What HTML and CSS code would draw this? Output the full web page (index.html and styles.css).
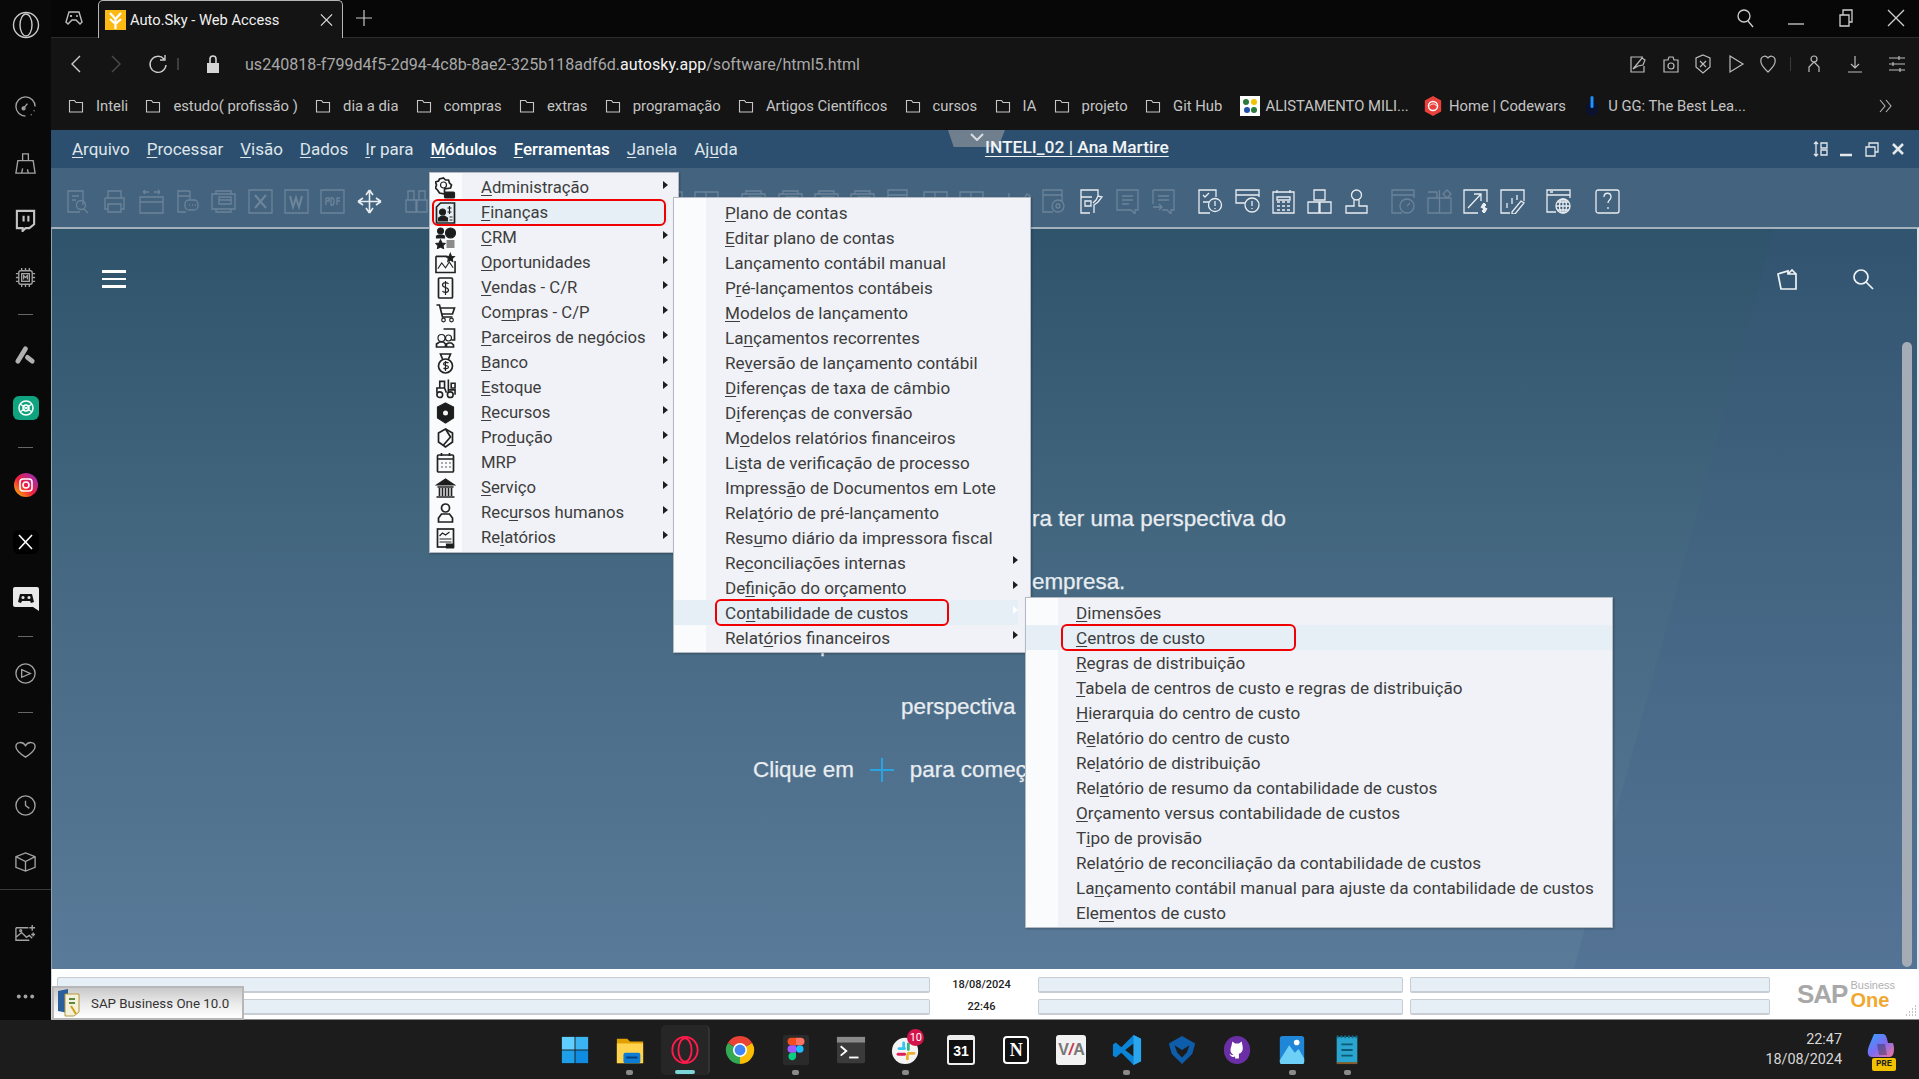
FILE: index.html
```html
<!DOCTYPE html>
<html lang="pt-BR">
<head>
<meta charset="utf-8">
<title>Auto.Sky - Web Access</title>
<link rel="stylesheet" href="styles.css">
</head>
<body>
<svg class="defs" width="0" height="0">
  <defs>
    <symbol id="folder" viewBox="0 0 16 16"><path d="M1.5 14V2.5h5l1.5 2h6.5V14z"/></symbol>
    <symbol id="t-docsearch" viewBox="0 0 25 25"><path d="M17 16V2H2v21h12M6 7h7M6 11h4"/><circle cx="15" cy="16" r="4.5"/><path d="M18 20l4 4"/></symbol>
    <symbol id="t-print" viewBox="0 0 25 25"><path d="M6 9V2h13v7M3 9h19v11h-3M6 20H3V9M6 15h13v8H6z"/></symbol>
    <symbol id="t-win" viewBox="0 0 25 25"><path d="M1 8h23v16H1zM1 13h23M4 3h6M15 3h6M4 3l2-2M4 3l2 2M21 3l-2-2M21 3l-2 2"/></symbol>
    <symbol id="t-docchat" viewBox="0 0 25 25"><path d="M15 2H3v21h8M3 7h12V2M15 7v3"/><rect x="10" y="11" width="13" height="10" rx="4"/><path d="M14 16h1M17 16h1M20 16h1"/></symbol>
    <symbol id="t-stack" viewBox="0 0 25 25"><path d="M5 5V2h15v3M1 5h23v15H1zM5 20v3h15v-3M8 8h12v7H8zM8 11h12"/></symbol>
    <symbol id="t-x" viewBox="0 0 25 25"><path d="M1 1h23v23H1z"/><path class="fat" d="M7 6l11 13M18 6L7 19"/></symbol>
    <symbol id="t-w" viewBox="0 0 25 25"><path d="M1 1h23v23H1z"/><path class="fat" d="M6 7l3 11 3-9 3 9 3-11"/></symbol>
    <symbol id="t-pdf" viewBox="0 0 25 25"><path d="M1 1h23v23H1z"/><path d="M6 9v7M6 9h3v3H6M11 9v7h2l1-2v-3l-1-2zM17 16V9h3M17 12h3"/></symbol>
    <symbol id="t-move" viewBox="0 0 25 25"><path class="thin-w" d="M12.500 1v23M1 12.500h23M12.500 1L9 6M12.500 1L16 6M12.500 24L9 19M12.500 24L16 19M1 12.500L6 9M1 12.500L6 16M24 12.500L19 9M24 12.500L19 16"/></symbol>
    <symbol id="t-binoc" viewBox="0 0 25 25"><path d="M4 2h6v9H4zM15 2h6v9h-6zM2 11h10v12H2zM13 11h10v12H13z"/></symbol>
    <symbol id="t-cols" viewBox="0 0 25 25"><path d="M1 3h23v20H1zM12 3v20M1 9h23"/></symbol>
    <symbol id="t-pen" viewBox="0 0 25 25"><path d="M3 4v19M10 22L21 5l3 2-11 17-4 1z"/></symbol>
    <symbol id="t-gear" viewBox="0 0 25 25"><path d="M20 12V1H1v22h10M1 6h19"/><circle cx="16" cy="17" r="6"/><circle cx="16" cy="17" r="2"/></symbol>
    <symbol id="t-flow" viewBox="0 0 25 25"><path d="M19 8V1H2v23h9M2 8h11M6 12h6v5H6zM15 24v-8l4-3 4-5-4-1-2 4-3 3"/></symbol>
    <symbol id="t-chat" viewBox="0 0 25 25"><path d="M2 1h21v20h-3v4l-4-4H2zM7 7h11M7 11h11M7 15h7"/></symbol>
    <symbol id="t-chat2" viewBox="0 0 25 25"><path d="M2 1h21v20h-3v4l-4-4h-5M2 15V1M7 7h11M7 11h11M2 18h9M8 15l3 3-3 3"/></symbol>
    <symbol id="t-doctime" viewBox="0 0 25 25"><path d="M18 8V1H1v23h11M5 6l2 2 4-4M5 13h6"/><circle cx="17" cy="16" r="6.500"/><path d="M17 12v5M17 19v1"/></symbol>
    <symbol id="t-wintime" viewBox="0 0 25 25"><path d="M24 8V1H1v13h9M1 6h23"/><circle cx="17" cy="16" r="7"/><path d="M17 12v5M17 19v1"/></symbol>
    <symbol id="t-calc" viewBox="0 0 25 25"><path d="M2 3h21v21H2zM6 1v3M19 1v3M6 8h13v3H6zM6 13h3M11 13h3M16 13h3M6 17h3M11 17h3M16 17h3M6 21h3M11 21h3M16 21h3"/></symbol>
    <symbol id="t-boxes" viewBox="0 0 25 25"><path d="M7 1h11v10H7zM1 13h11v11H1zM13 13h11v11H13z"/></symbol>
    <symbol id="t-stamp" viewBox="0 0 25 25"><circle cx="12.500" cy="6" r="5"/><path d="M10 11v6H2v7h21v-7h-8v-6"/></symbol>
    <symbol id="t-dash" viewBox="0 0 25 25"><path d="M23 9V1H1v23h10M1 6h22"/><circle cx="16" cy="17" r="7"/><path d="M16 17l3-3"/></symbol>
    <symbol id="t-grid" viewBox="0 0 25 25"><path d="M1 9h23v15H1zM12.500 1v23M1 3h9v6M20 1l4 4-4 4-4-4z"/></symbol>
    <symbol id="t-money" viewBox="0 0 25 25"><path d="M24 13V1H1v23h14M5 19L18 5M11 5h7v7"/><path class="fat" d="M23 16h-3l-1 2 4 2-1 2h-3M21 14v10"/></symbol>
    <symbol id="t-edit" viewBox="0 0 25 25"><path d="M24 12V1H1v23h9M7 14v5M12 9v6M17 6v5M12 23l9-11 3 2-9 11-3 0z"/></symbol>
    <symbol id="t-globe" viewBox="0 0 25 25"><path d="M24 9V1H1v22h9M1 6h23M4 3h3"/><circle cx="17" cy="17" r="7"/><path d="M10 17h14M17 10v14M12 13h10M12 21h10"/><ellipse cx="17" cy="17" rx="3.500" ry="7"/></symbol>
    <symbol id="t-help" viewBox="0 0 25 25"><rect x="1" y="1" width="23" height="23" rx="2"/><path d="M9 8c0-5 7-5 7 0 0 3-3 3-3 6M13 18v2"/></symbol>

    <symbol id="m-adm" viewBox="0 0 20 22"><path class="thick" d="M8 1l2 2h3l1 3 2 2-1 3-6 1v5l-5-1-2-3-2-2 1-3-1-3 3-1 1-2z"/><circle cx="8" cy="8" r="3"/><rect class="solid" x="9" y="15" width="10" height="6" rx="1"/></symbol>
    <symbol id="m-fin" viewBox="0 0 20 22"><path class="thick" d="M5 1h14v20H1V5z"/><circle class="solid" cx="7" cy="10" r="3"/><path class="solid" d="M3 19v-3l3-2h3l3 2v3z"/><path d="M14 4v8M12 6h4M12 10h4M14 15h3M14 18h3"/></symbol>
    <symbol id="m-crm" viewBox="0 0 20 22"><circle class="solid" cx="5" cy="4" r="3"/><path class="solid" d="M1 11V9l2-1h4l2 1v2z"/><circle class="solid" cx="15" cy="6" r="5"/><path class="solid" d="M5 13l1.500 3 3 .5-2 2 .5 3-3-1.500-3 1.500.5-3-2-2 3-.5z"/><rect class="grey" x="11" y="13" width="8" height="8"/></symbol>
    <symbol id="m-opp" viewBox="0 0 22 22"><path class="thick" d="M1 4h12M1 4v17h20V9"/><path d="M3 17l4-6 4 5 4-6 4 6"/><path class="solid" d="M16 1l1.200 3 3 .3-2.200 2 .6 3-2.600-1.500-2.600 1.500.6-3-2.200-2 3-.3z"/></symbol>
    <symbol id="m-sale" viewBox="0 0 20 22"><rect class="thick" x="3" y="1" width="14" height="20" rx="1"/><path d="M13 7c-1-2-6-2-6 1s6 2 6 5-5 3-6 1M10 4v14"/></symbol>
    <symbol id="m-cart" viewBox="0 0 20 22"><path class="thick" d="M1 3h3l3 12h10M5 6h14l-2 6H7"/><circle cx="8" cy="18" r="1.800"/><circle cx="16" cy="18" r="1.800"/></symbol>
    <symbol id="m-bp" viewBox="0 0 20 22"><path class="thick" d="M8 2h11v11h-3"/><circle cx="6" cy="11" r="3.500"/><circle cx="13" cy="11" r="3"/><path class="thick" d="M1 20v-3l3-2h4l2 2v3zM11 20v-3l2-1h3l2 2v2z"/></symbol>
    <symbol id="m-bank" viewBox="0 0 20 22"><circle class="thick" cx="10" cy="14" r="7"/><path class="thick" d="M7 7L5 2h10l-2 5"/><path d="M13 11c-1-1-5-1-5 1s5 1 5 3-4 2-5 1M10 9v10"/></symbol>
    <symbol id="m-stock" viewBox="0 0 22 22"><circle class="thick" cx="5" cy="18" r="3"/><circle class="thick" cx="16" cy="18" r="3"/><path class="thick" d="M2 16v-5h8l2 5M10 11V4H5v7M14 2v14M14 13h7v5M17 6h4v5h-4z"/></symbol>
    <symbol id="m-res" viewBox="0 0 20 22"><path class="solid" d="M10 1l8 4v11l-8 5-8-5V5z"/><circle class="hole" cx="10" cy="11" r="2.500"/></symbol>
    <symbol id="m-prod" viewBox="0 0 20 22"><path class="thick" d="M10 2l7 4v9l-7 5-7-5V6z"/><path class="thick" d="M10 2l5 8-7 8"/></symbol>
    <symbol id="m-mrp" viewBox="0 0 20 22"><rect class="thick" x="2" y="3" width="16" height="17" rx="1"/><path class="thick" d="M2 7h16M6 1v3M14 1v3"/><path class="thick" d="M6 11h1M10 11h1M14 11h1M6 15h1M10 15h1M14 15h1"/></symbol>
    <symbol id="m-serv" viewBox="0 0 20 22"><path class="solid" d="M1 8l9-6 9 6z"/><path class="thick" d="M2 10h16M1 20h18M4 11v8M7 11v8M10 11v8M13 11v8M16 11v8"/></symbol>
    <symbol id="m-hr" viewBox="0 0 20 22"><circle class="thick" cx="10" cy="6" r="4"/><path class="thick" d="M3 20v-4l3-4h8l3 4v4z"/></symbol>
    <symbol id="m-rep" viewBox="0 0 20 22"><rect class="thick" x="2" y="2" width="16" height="18"/><path d="M4 9l3-3 3 2 4-3M4 12h12M4 15h12"/><path class="solid" d="M11 17h7v4h-7z"/></symbol>
  </defs>
</svg>

<div class="screen">
  <div class="main">
    <aside class="sidebar">
      <div class="sb-top"><svg class="sb-icon lg" viewBox="0 0 28 28"><circle cx="14" cy="14" r="12.500"/><ellipse cx="14" cy="14" rx="6" ry="11"/></svg></div>
      <div class="sb-group g-b">
        <div class="sb-item"><svg class="sb-icon" viewBox="0 0 24 24"><path d="M12 22a10 10 0 1 1 10-10M9 15l5-6M21 16v1M18 20v1"/><circle cx="10" cy="14" r="1.500"/></svg></div>
        <div class="sb-item"><svg class="sb-icon" viewBox="0 0 24 24"><path d="M9 9V2h6v7M4 9h16l2 13H2zM8 22l1-5M15 22l-1-4"/></svg></div>
        <div class="sb-item"><svg class="sb-icon twitch" viewBox="0 0 24 24"><path d="M3 2h18v14l-5 4h-4l-3 3v-3H3z"/><path d="M10 7v6M15 7v6"/></svg></div>
        <div class="sb-item"><svg class="sb-icon" viewBox="0 0 24 24"><rect x="5" y="5" width="14" height="14" rx="2"/><rect x="8" y="8" width="8" height="8"/><path d="M8 2v3M12 2v3M16 2v3M8 19v3M12 19v3M16 19v3M2 8h3M2 12h3M2 16h3M19 8h3M19 12h3M19 16h3M10 14v-4l2 2 2-2v4"/></svg></div>
      </div>
      <div class="sb-line"></div>
      <div class="sb-group g-c">
        <div class="sb-item short"><svg class="sb-icon" viewBox="0 0 24 24"><path class="sb-fat" d="M4 19L12 6"/><path class="sb-fat" d="M14 15l5 4"/></svg></div>
        <div class="sb-item short"><svg class="sb-app" viewBox="0 0 26 24"><rect width="26" height="24" rx="6" fill="#10a37f"/><circle cx="13" cy="12" r="7" fill="none" stroke="#fff" stroke-width="1.500"/><circle cx="13" cy="12" r="3" fill="none" stroke="#fff" stroke-width="1.500"/><path d="M7 8l12 8M19 8L7 16" stroke="#fff" stroke-width="1.200"/></svg></div>
      </div>
      <div class="sb-line l-c"></div>
      <div class="sb-group g-d">
        <div class="sb-item"><svg class="sb-app" viewBox="0 0 26 24"><defs><linearGradient id="ig" x1="0" y1="1" x2="1" y2="0"><stop offset="0" stop-color="#fdc800"/><stop offset=".45" stop-color="#f0203c"/><stop offset="1" stop-color="#8a2fd0"/></linearGradient></defs><circle cx="13" cy="12" r="12" fill="url(#ig)"/><rect x="7" y="6" width="12" height="12" rx="3" fill="none" stroke="#fff" stroke-width="1.600"/><circle cx="13" cy="12" r="3" fill="none" stroke="#fff" stroke-width="1.600"/></svg></div>
        <div class="sb-item"><svg class="sb-app" viewBox="0 0 26 24"><rect width="26" height="24" rx="6" fill="#000"/><path d="M6 5l13 14M19 5L6 19" stroke="#fff" stroke-width="1.600" fill="none"/></svg></div>
        <div class="sb-item"><svg class="sb-app" viewBox="0 0 26 24"><path d="M2 0h22a2 2 0 0 1 2 2v22l-6-4H2a2 2 0 0 1-2-2V2a2 2 0 0 1 2-2z" fill="#e8e8e8"/><path d="M7 7h12l2 8-3 1-1-2H9l-1 2-3-1z" fill="#111"/><circle cx="10" cy="10.500" r="1.500" fill="#e8e8e8"/><circle cx="16" cy="10.500" r="1.500" fill="#e8e8e8"/></svg></div>
      </div>
      <div class="sb-line l-d"></div>
      <div class="sb-group g-e">
        <div class="sb-item"><svg class="sb-icon" viewBox="0 0 24 24"><circle cx="12" cy="12" r="10"/><path d="M8 8l9 4-9 4z"/></svg></div>
      </div>
      <div class="sb-line l-e"></div>
      <div class="sb-group g-f">
        <div class="sb-item mid"><svg class="sb-icon" viewBox="0 0 24 24"><path d="M12 20C6 16 2 13 2 9c0-5 7-6 10-1 3-5 10-4 10 1 0 4-4 7-10 11z"/></svg></div>
        <div class="sb-item mid"><svg class="sb-icon" viewBox="0 0 24 24"><circle cx="12" cy="12" r="10"/><path d="M12 7v5l4 3"/></svg></div>
        <div class="sb-item mid"><svg class="sb-icon" viewBox="0 0 24 24"><path d="M12 3l10 4v11l-10 4-10-4V7zM2 7l10 5 10-5M12 12v10"/></svg></div>
      </div>
      <div class="sb-sep"></div>
      <div class="sb-group g-g">
        <div class="sb-item mid"><svg class="sb-icon" viewBox="0 0 24 24"><path d="M2 6h13M2 6v13h14M2 16l6-5 5 5 3-2 3 3M19 3v6M16 6h6M20 11v4M18 13h4"/><circle cx="7" cy="9" r="1"/></svg></div>
        <div class="sb-item mid"><svg class="sb-icon dots" viewBox="0 0 24 24"><circle cx="5" cy="12" r="2"/><circle cx="12" cy="12" r="2"/><circle cx="19" cy="12" r="2"/></svg></div>
      </div>
    </aside>

    <div class="browser">
      <header class="tabstrip">
        <svg class="gx" viewBox="0 0 20 16"><path d="M5 2h10l3 10-2 2-4-4H8l-4 4-2-2zM6 6h2M7 5v2M12 6h2"/></svg>
        <div class="tab">
          <svg class="favicon" viewBox="0 0 21 20"><rect width="21" height="20" fill="#fdb913"/><path d="M10.500 19V9M10.500 9L5 3M10.500 9L16 3M10.500 14L5 9M10.500 14L16 9" stroke="#fff" stroke-width="2.200" fill="none"/></svg>
          <span class="tab-title">Auto.Sky - Web Access</span>
          <svg class="tab-close" viewBox="0 0 14 14"><path d="M1 1l12 12M13 1L1 13"/></svg>
        </div>
        <svg class="tab-new" viewBox="0 0 16 16"><path d="M8 0v16M0 8h16"/></svg>
        <div class="win-controls">
          <svg class="wc" viewBox="0 0 20 20"><circle cx="8" cy="8" r="6"/><path d="M12 13l5 6"/></svg>
          <svg class="wc" viewBox="0 0 20 20"><path d="M2 16h16"/></svg>
          <svg class="wc" viewBox="0 0 20 20"><path d="M4 7h9v11H4zM7 7V2h9v12h-3"/></svg>
          <svg class="wc" viewBox="0 0 20 20"><path d="M2 2l16 16M18 2L2 18"/></svg>
        </div>
      </header>

      <div class="addressbar">
        <svg class="nav" viewBox="0 0 12 20"><path d="M10 2L2 10l8 8"/></svg>
        <svg class="nav dim" viewBox="0 0 12 20"><path d="M2 2l8 8-8 8"/></svg>
        <svg class="nav reload" viewBox="0 0 20 20"><path d="M16 5a8 8 0 1 0 2 6M17 1v5h-5"/></svg>
        <span class="ab-dots"></span>
        <svg class="lock" viewBox="0 0 14 18"><path class="lock-body" d="M1 8h12v10H1z"/><path class="lock-arc" d="M4 8V4a3 3 0 0 1 6 0v4"/></svg>
        <div class="url">us240818-f799d4f5-2d94-4c8b-8ae2-325b118adf6d.<b>autosky.app</b>/software/html5.html</div>
        <div class="ab-tools">
          <svg class="ab-i" viewBox="0 0 20 20"><path d="M15 3H3v15h13v-6M5 15l9-11 3 2-2 5-5 1z"/></svg>
          <svg class="ab-i" viewBox="0 0 20 20"><path d="M3 6h4l1-3h4l1 3h4v12H3z"/><circle cx="10" cy="12" r="3"/></svg>
          <svg class="ab-i" viewBox="0 0 20 20"><path d="M10 1l7 3v9l-7 6-7-6V4zM7 7l6 6M13 7l-6 6"/></svg>
          <svg class="ab-i" viewBox="0 0 20 20"><path d="M4 2l13 8-13 8z"/></svg>
          <svg class="ab-i" viewBox="0 0 20 20"><path d="M10 18C4 12 2 9 3 5c1-3 5-4 7-1 2-3 6-2 7 1 1 4-1 7-7 13z"/></svg>
          <span class="ab-sep"></span>
          <svg class="ab-i" viewBox="0 0 20 20"><circle cx="10" cy="5" r="3"/><path d="M10 8l-5 5v5M10 8l5 5v5"/></svg>
          <svg class="ab-i i3" viewBox="0 0 20 20"><path d="M10 2v12M6 10l4 4 4-4M3 18h14"/></svg>
          <svg class="ab-i i3" viewBox="0 0 20 20"><path d="M2 4h16M2 10h16M2 16h16M12 2v4M6 8v4M13 14v4"/></svg>
        </div>
      </div>

      <nav class="bookmarks">
        <a class="bm"><svg class="folder"><use href="#folder"/></svg>Inteli</a>
        <a class="bm"><svg class="folder"><use href="#folder"/></svg>estudo( profissão )</a>
        <a class="bm"><svg class="folder"><use href="#folder"/></svg>dia a dia</a>
        <a class="bm"><svg class="folder"><use href="#folder"/></svg>compras</a>
        <a class="bm"><svg class="folder"><use href="#folder"/></svg>extras</a>
        <a class="bm"><svg class="folder"><use href="#folder"/></svg>programação</a>
        <a class="bm"><svg class="folder"><use href="#folder"/></svg>Artigos Científicos</a>
        <a class="bm"><svg class="folder"><use href="#folder"/></svg>cursos</a>
        <a class="bm"><svg class="folder"><use href="#folder"/></svg>IA</a>
        <a class="bm"><svg class="folder"><use href="#folder"/></svg>projeto</a>
        <a class="bm"><svg class="folder"><use href="#folder"/></svg>Git Hub</a>
        <a class="bm tight"><svg class="bm-fav" viewBox="0 0 20 20"><rect width="20" height="20" fill="#fff"/><circle cx="6" cy="6" r="3" fill="#2a7a3a"/><circle cx="14" cy="6" r="3" fill="#f2c200"/><circle cx="7" cy="14" r="3" fill="#1f4fa8"/><circle cx="14" cy="14" r="3" fill="#2a7a3a"/></svg>ALISTAMENTO MILI...</a>
        <a class="bm tight"><svg class="bm-fav" viewBox="0 0 20 22"><path d="M10 0l9 5v12l-9 5-9-5V5z" fill="#e8413c"/><circle cx="10" cy="11" r="5" fill="none" stroke="#fff" stroke-width="1.600"/><path d="M6 11c3-3 6-3 8 0" stroke="#fff" fill="none"/></svg>Home | Codewars</a>
        <a class="bm ugg"><svg class="bm-fav thin" viewBox="0 0 14 20"><rect x="1" y="6" width="12" height="14" rx="6" fill="#0b1230"/><rect x="5.500" y="0" width="3" height="12" rx="1.500" fill="#1e90ff"/></svg>U GG: The Best Lea...</a>
        <svg class="bm-more" viewBox="0 0 14 14"><path d="M2 1l5 6-5 6M8 1l5 6-5 6"/></svg>
      </nav>

      <section class="app">
        <div class="titlebar">
          <ul class="menubar">
            <li><u>A</u>rquivo</li>
            <li><u>P</u>rocessar</li>
            <li><u>V</u>isão</li>
            <li><u>D</u>ados</li>
            <li><u>I</u>r para</li>
            <li class="on"><u>M</u>ódulos</li>
            <li class="on"><u>F</u>erramentas</li>
            <li><u>J</u>anela</li>
            <li>Aj<u>u</u>da</li>
          </ul>
          <div class="drop-tab"><svg viewBox="0 0 14 8"><path d="M1 1l6 6 6-6"/></svg></div>
          <div class="app-title">INTELI_02 | Ana Martire</div>
          <div class="app-controls">
            <svg viewBox="0 0 16 16"><path d="M4 1v14M2 3l2-2 2 2M2 13l2 2 2-2M9 2h6v5H9zM9 9h6v5H9z"/></svg>
            <svg viewBox="0 0 16 16"><path class="bar" d="M2 14h12"/></svg>
            <svg viewBox="0 0 16 16"><path d="M2 6h9v9H2zM5 6V2h9v9h-3"/></svg>
            <svg viewBox="0 0 16 16"><path class="bar" d="M3 3l10 10M13 3L3 13"/></svg>
          </div>
        </div>

        <div class="toolbar">
          <svg class="ti"><use href="#t-docsearch"/></svg>
          <svg class="ti"><use href="#t-print"/></svg>
          <svg class="ti"><use href="#t-win"/></svg>
          <svg class="ti"><use href="#t-docchat"/></svg>
          <svg class="ti"><use href="#t-stack"/></svg>
          <svg class="ti"><use href="#t-x"/></svg>
          <svg class="ti"><use href="#t-w"/></svg>
          <svg class="ti"><use href="#t-pdf"/></svg>
          <svg class="ti on"><use href="#t-move"/></svg>
          <svg class="ti sep"><use href="#t-binoc"/></svg>
          <svg class="ti"><use href="#t-cols"/></svg>
          <svg class="ti"><use href="#t-cols"/></svg>
          <svg class="ti"><use href="#t-cols"/></svg>
          <svg class="ti"><use href="#t-cols"/></svg>
          <svg class="ti"><use href="#t-cols"/></svg>
          <svg class="ti"><use href="#t-cols"/></svg>
          <svg class="ti"><use href="#t-cols"/></svg>
          <svg class="ti"><use href="#t-cols"/></svg>
          <svg class="ti sep"><use href="#t-stack"/></svg>
          <svg class="ti"><use href="#t-stack"/></svg>
          <svg class="ti"><use href="#t-stack"/></svg>
          <svg class="ti"><use href="#t-stack"/></svg>
          <svg class="ti"><use href="#t-gear"/></svg>
          <svg class="ti"><use href="#t-cols"/></svg>
          <svg class="ti"><use href="#t-cols"/></svg>
          <svg class="ti sep"><use href="#t-pen"/></svg>
          <svg class="ti"><use href="#t-gear"/></svg>
          <svg class="ti on"><use href="#t-flow"/></svg>
          <svg class="ti"><use href="#t-chat"/></svg>
          <svg class="ti"><use href="#t-chat2"/></svg>
          <svg class="ti on sep"><use href="#t-doctime"/></svg>
          <svg class="ti on"><use href="#t-wintime"/></svg>
          <svg class="ti on"><use href="#t-calc"/></svg>
          <svg class="ti on"><use href="#t-boxes"/></svg>
          <svg class="ti on"><use href="#t-stamp"/></svg>
          <svg class="ti sep"><use href="#t-dash"/></svg>
          <svg class="ti"><use href="#t-grid"/></svg>
          <svg class="ti on"><use href="#t-money"/></svg>
          <svg class="ti on"><use href="#t-edit"/></svg>
          <svg class="ti on sep"><use href="#t-globe"/></svg>
          <svg class="ti on sep-l"><use href="#t-help"/></svg>
        </div>

        <div class="desktop">
          <div class="desk-shade"></div>
          <div class="desk-top">
            <div class="hamburger"><span></span><span></span><span></span></div>
            <svg class="desk-i bag" viewBox="0 0 24 24"><path d="M3 7l10-3v3h8v15H6zM13 7l4-4 4 4"/></svg>
            <svg class="desk-i find" viewBox="0 0 24 24"><circle cx="10" cy="10" r="7"/><path d="M15 15l7 7"/></svg>
          </div>
          <div class="welcome">
            <p class="w1">ra ter uma perspectiva do</p>
            <p class="w2">empresa.</p>
            <p class="w3">p</p>
            <p class="w4">perspectiva</p>
            <p class="w5">Clique em <svg class="plus" viewBox="0 0 24 24"><path d="M12 0v24M0 12h24"/></svg> para começar</p>
          </div>
          <div class="scrollbar"></div>
        </div>

        <footer class="status">
          <div class="fields">
            <div class="field wide"></div>
            <div class="stamp">18/08/2024</div>
            <div class="field mid-f"></div>
            <div class="field end-f"></div>
            <div class="field wide"></div>
            <div class="stamp">22:46</div>
            <div class="field mid-f"></div>
            <div class="field end-f"></div>
          </div>
          <div class="sap-logo">
            <span class="sap-word">SAP</span>
            <span class="sap-sub"><small>Business</small><strong>One</strong></span>
          </div>
          <svg class="grip" viewBox="0 0 12 12"><path d="M10 1h1M7 4h1M10 4h1M4 7h1M7 7h1M10 7h1M1 10h1M4 10h1M7 10h1M10 10h1"/></svg>
        </footer>

        <div class="tooltip">
          <svg class="tt-icon" viewBox="0 0 24 28"><path d="M1 2l10-2v24L1 22z" fill="#2b5f9c"/><path d="M8 5h14v18l-5 4H8z" fill="#f6f1dc" stroke="#b49a3a"/><path d="M12 10h6M12 14h6" stroke="#5d8a3a" stroke-width="2"/><path d="M14 17l5 8" stroke="#d4a017" stroke-width="2"/></svg>
          <span>SAP Business One 10.0</span>
        </div>

        <div class="menu menu-1">
          <div class="mi"><svg class="mico"><use href="#m-adm"/></svg><span><u>A</u>dministração</span><i class="arrow"></i></div>
          <div class="mi hl"><svg class="mico"><use href="#m-fin"/></svg><span><u>F</u>inanças</span><b class="mark"></b></div>
          <div class="mi"><svg class="mico"><use href="#m-crm"/></svg><span><u>C</u>RM</span><i class="arrow"></i></div>
          <div class="mi"><svg class="mico"><use href="#m-opp"/></svg><span><u>O</u>portunidades</span><i class="arrow"></i></div>
          <div class="mi"><svg class="mico"><use href="#m-sale"/></svg><span><u>V</u>endas - C/R</span><i class="arrow"></i></div>
          <div class="mi"><svg class="mico"><use href="#m-cart"/></svg><span>Co<u>m</u>pras - C/P</span><i class="arrow"></i></div>
          <div class="mi"><svg class="mico"><use href="#m-bp"/></svg><span><u>P</u>arceiros de negócios</span><i class="arrow"></i></div>
          <div class="mi"><svg class="mico"><use href="#m-bank"/></svg><span><u>B</u>anco</span><i class="arrow"></i></div>
          <div class="mi"><svg class="mico"><use href="#m-stock"/></svg><span><u>E</u>stoque</span><i class="arrow"></i></div>
          <div class="mi"><svg class="mico"><use href="#m-res"/></svg><span><u>R</u>ecursos</span><i class="arrow"></i></div>
          <div class="mi"><svg class="mico"><use href="#m-prod"/></svg><span>Pro<u>d</u>ução</span><i class="arrow"></i></div>
          <div class="mi"><svg class="mico"><use href="#m-mrp"/></svg><span>MRP</span><i class="arrow"></i></div>
          <div class="mi"><svg class="mico"><use href="#m-serv"/></svg><span><u>S</u>erviço</span><i class="arrow"></i></div>
          <div class="mi"><svg class="mico"><use href="#m-hr"/></svg><span>Rec<u>u</u>rsos humanos</span><i class="arrow"></i></div>
          <div class="mi"><svg class="mico"><use href="#m-rep"/></svg><span>Re<u>l</u>atórios</span><i class="arrow"></i></div>
        </div>

        <div class="menu menu-2">
          <div class="mi"><span><u>P</u>lano de contas</span></div>
          <div class="mi"><span><u>E</u>ditar plano de contas</span></div>
          <div class="mi"><span>Lançamento contábil manual</span></div>
          <div class="mi"><span>P<u>r</u>é-lançamentos contábeis</span></div>
          <div class="mi"><span><u>M</u>odelos de lançamento</span></div>
          <div class="mi"><span>La<u>n</u>çamentos recorrentes</span></div>
          <div class="mi"><span>Re<u>v</u>ersão de lançamento contábil</span></div>
          <div class="mi"><span><u>D</u>iferenças de taxa de câmbio</span></div>
          <div class="mi"><span>D<u>i</u>ferenças de conversão</span></div>
          <div class="mi"><span>M<u>o</u>delos relatórios financeiros</span></div>
          <div class="mi"><span>Li<u>s</u>ta de verificação de processo</span></div>
          <div class="mi"><span>Impress<u>ã</u>o de Documentos em Lote</span></div>
          <div class="mi"><span>Rela<u>t</u>ório de pré-lançamento</span></div>
          <div class="mi"><span>Res<u>u</u>mo diário da impressora fiscal</span></div>
          <div class="mi"><span>Re<u>c</u>onciliações internas</span><i class="arrow"></i></div>
          <div class="mi"><span>De<u>f</u>inição do orçamento</span><i class="arrow"></i></div>
          <div class="mi hl"><span>Co<u>n</u>tabilidade de custos</span><i class="arrow faint"></i><b class="mark"></b></div>
          <div class="mi"><span>Relat<u>ó</u>rios financeiros</span><i class="arrow"></i></div>
        </div>

        <div class="menu menu-3">
          <div class="mi"><span><u>D</u>imensões</span></div>
          <div class="mi hl"><span><u>C</u>entros de custo</span><b class="mark"></b></div>
          <div class="mi"><span><u>R</u>egras de distribuição</span></div>
          <div class="mi"><span><u>T</u>abela de centros de custo e regras de distribuição</span></div>
          <div class="mi"><span><u>H</u>ierarquia do centro de custo</span></div>
          <div class="mi"><span>R<u>e</u>latório do centro de custo</span></div>
          <div class="mi"><span>Re<u>l</u>atório de distribuição</span></div>
          <div class="mi"><span>Rel<u>a</u>tório de resumo da contabilidade de custos</span></div>
          <div class="mi"><span><u>O</u>rçamento versus contabilidade de custos</span></div>
          <div class="mi"><span>T<u>i</u>po de provisão</span></div>
          <div class="mi"><span>Relat<u>ó</u>rio de reconciliação da contabilidade de custos</span></div>
          <div class="mi"><span>La<u>n</u>çamento contábil manual para ajuste da contabilidade de custos</span></div>
          <div class="mi"><span>Ele<u>m</u>entos de custo</span></div>
        </div>
      </section>
    </div>
  </div>

  <footer class="taskbar">
    <div class="tb-icons">
      <div class="tb-item"><svg class="tb-i" viewBox="0 0 32 32"><rect x="2" y="2" width="13.500" height="13.500" fill="#5fcfff"/><rect x="16.500" y="2" width="13.500" height="13.500" fill="#3db4f2"/><rect x="2" y="16.500" width="13.500" height="13.500" fill="#1f9fe8"/><rect x="16.500" y="16.500" width="13.500" height="13.500" fill="#0f8ce0"/></svg></div>
      <div class="tb-item dot"><svg class="tb-i" viewBox="0 0 32 32"><path d="M2 4h11l3 3h14v23H2z" fill="#e0a100"/><rect x="2" y="9" width="28" height="21" fill="#ffd34e"/><rect x="9" y="19" width="18" height="11" rx="2" fill="#0c7cd5"/><rect x="12" y="23" width="12" height="2" fill="#0a3d78"/></svg></div>
      <div class="tb-item active"><svg class="tb-i" viewBox="0 0 32 32"><ellipse cx="16" cy="16" rx="13.500" ry="14" fill="none" stroke="#ff1b4c" stroke-width="2"/><ellipse cx="16" cy="16" rx="7" ry="12.500" fill="none" stroke="#ff1b4c" stroke-width="2"/></svg></div>
      <div class="tb-item"><svg class="tb-i" viewBox="0 0 32 32"><path d="M16 16L3 8.500A15 15 0 0 1 29 8.500z" fill="#ea4335"/><path d="M16 16L29 8.500A15 15 0 0 1 16 31z" fill="#fbbc04"/><path d="M16 16L16 31A15 15 0 0 1 3 8.500z" fill="#34a853"/><circle cx="16" cy="16" r="7.500" fill="#fff"/><circle cx="16" cy="16" r="5.800" fill="#4285f4"/></svg></div>
      <div class="tb-item dot"><svg class="tb-i" viewBox="0 0 32 32"><rect x="2" y="0" width="28" height="32" rx="3" fill="#2a2a2a"/><path d="M11 3h5v8h-5a4 4 0 0 1 0-8z" fill="#f24e1e"/><path d="M16 3h5a4 4 0 0 1 0 8h-5z" fill="#ff7262"/><path d="M11 11h5v8h-5a4 4 0 0 1 0-8z" fill="#a259ff"/><circle cx="20" cy="15" r="4" fill="#1abcfe"/><path d="M11 19h5v4a4 4 0 1 1-5-4z" fill="#0acf83"/></svg></div>
      <div class="tb-item"><svg class="tb-i" viewBox="0 0 32 32"><rect x="1" y="2" width="30" height="28" rx="2" fill="#3a3a3a"/><rect x="1" y="2" width="30" height="6" fill="#8a8a8a"/><path d="M5 12l6 5-6 5" stroke="#fff" stroke-width="2" fill="none"/><path d="M14 24h10" stroke="#fff" stroke-width="2"/></svg></div>
      <div class="tb-item dot"><svg class="tb-i" viewBox="0 0 32 32"><circle cx="15" cy="17" r="14" fill="#f4f4f4"/><rect x="7" y="13" width="9" height="3" rx="1.500" fill="#36c5f0"/><rect x="12" y="7" width="3" height="8" rx="1.500" fill="#36c5f0"/><rect x="17" y="8" width="3" height="9" rx="1.500" fill="#2eb67d"/><rect x="17" y="18" width="9" height="3" rx="1.500" fill="#ecb22e"/><rect x="16" y="20" width="3" height="7" rx="1.500" fill="#ecb22e"/><rect x="6" y="19" width="10" height="3" rx="1.500" fill="#e01e5a"/></svg><span class="badge">10</span></div>
      <div class="tb-item"><div class="cal"><span>31</span></div></div>
      <div class="tb-item"><div class="notion">N</div></div>
      <div class="tb-item"><div class="via"><span>V</span><i>/</i><span>A</span></div></div>
      <div class="tb-item dot"><svg class="tb-i" viewBox="0 0 32 32"><path d="M23 0l8 4v24l-8 4-13-13-6 5-3-2V10l3-2 6 5z" fill="#0a84d6"/><path d="M23 9v14l-9-7z" fill="#1c1c1c"/><path d="M23 0l8 4v24l-8 4z" fill="#2aa6ef"/></svg></div>
      <div class="tb-item"><svg class="tb-i" viewBox="0 0 32 32"><path d="M16 1l14 8-3 11-11 11L5 20 2 9z" fill="#0e5dab"/><path d="M8 11l8 5 8-5-3 8-5 5-5-5z" fill="#1c1c1c"/></svg></div>
      <div class="tb-item"><svg class="tb-i" viewBox="0 0 32 32"><ellipse cx="16" cy="16" rx="14" ry="15" fill="#6b2fa5"/><path d="M11 7l3 2h4l3-2 1 5c1 5-2 8-4 8v5h-4v-2c-3 1-5 0-6-3 2 1 3 2 4 1-4-2-3-7-2-9z" fill="#fff"/></svg></div>
      <div class="tb-item dot"><svg class="tb-i" viewBox="0 0 32 32"><rect x="3" y="1" width="26" height="30" rx="3" fill="#1f86d8"/><path d="M3 27l10-16 6 8 4-4 6 10v4a2 2 0 0 1-2 2H5a2 2 0 0 1-2-2z" fill="#6fd0f7"/><circle cx="21" cy="8" r="3" fill="#fff"/></svg></div>
      <div class="tb-item dot"><svg class="tb-i" viewBox="0 0 32 32"><rect x="5" y="2" width="22" height="28" fill="#2aa5cf"/><rect x="5" y="29" width="22" height="2" fill="#8a5a24"/><path d="M5 2h22" stroke="#0f6f91" stroke-width="3" stroke-dasharray="2 2"/><path d="M10 10h12M10 16h12M10 22h12" stroke="#0d5a77" stroke-width="2"/></svg></div>
    </div>
    <div class="clock"><div>22:47</div><div>18/08/2024</div></div>
    <div class="copilot">
      <svg viewBox="0 0 30 38"><defs><linearGradient id="cp" x1="0" y1="0" x2="1" y2="1"><stop offset="0" stop-color="#2aa7ff"/><stop offset=".5" stop-color="#7e6bf2"/><stop offset="1" stop-color="#f2769a"/></linearGradient></defs><path d="M8 1h9c3 0 4 4 5 9h5c2 5 1 14-3 14H6c-5 0-5-6-3-11z" fill="url(#cp)"/><path d="M11 11h8l2 11h-8z" fill="#1c1c1c" opacity=".35"/></svg>
      <span>PRE</span>
    </div>
  </footer>
</div>
</body>
</html>
```
FILE: styles.css
```css
* { box-sizing: border-box; }
html, body { margin: 0; padding: 0; width: 1919px; height: 1079px; overflow: hidden; background: #0a0a0a; font-family: Roboto, "Liberation Sans", sans-serif; }
.defs { position: absolute; }
svg { display: block; flex: none; }
ul { list-style: none; margin: 0; padding: 0; }
p { margin: 0; }
u { text-underline-offset: 2px; text-decoration-thickness: 1px; }

.screen { display: flex; flex-direction: column; width: 1919px; height: 1079px; }
.main { display: flex; height: 1020px; }

/* sidebar */
.sidebar { width: 51px; flex: none; height: 1020px; background: #090909; display: flex; flex-direction: column; overflow: hidden; }
.sidebar > * { flex: none; }
.sb-top { height: 50px; display: flex; align-items: center; justify-content: center; }
.sb-item { height: 57px; display: flex; align-items: center; justify-content: center; }
.sb-item.short { height: 54px; }
.sb-item.mid { height: 56px; }
.sb-icon { width: 23px; height: 23px; fill: none; stroke: #a3a3a3; stroke-width: 1.4; }
.sb-icon.lg { width: 28px; height: 28px; stroke: #c9c9c9; }
.sb-icon.dots { fill: #a3a3a3; stroke: none; }
.sb-icon.twitch { stroke: #c4c4c4; stroke-width: 2.2; }
.sb-fat { stroke: #b0b0b0; stroke-width: 5; stroke-linecap: round; }
.sb-app { width: 26px; height: 24px; }
.sb-line { width: 15px; height: 1px; background: #666; margin: 8px 0 0 18px; }
.sb-sep { height: 1px; background: #3a3a3a; }
.g-b { margin-top: 28px; }
.g-c { margin-top: 12px; }
.l-c { margin-top: 12px; }
.g-d { margin-top: 8px; }
.l-d { margin-top: 9px; }
.g-e { margin-top: 8px; }
.l-e { margin-top: 10px; }
.g-f { margin-top: 8px; }
.g-g { margin-top: 15px; display: flex; flex-direction: column; gap: 7px; }

/* browser */
.browser { flex: 1; min-width: 0; display: flex; flex-direction: column; background: #141414; }
.tabstrip { height: 38px; flex: none; background: #070707; display: flex; align-items: flex-end; border-bottom: 1px solid #2c2c2c; }
.gx { width: 20px; height: 16px; margin: 0 0 11px 13px; fill: none; stroke: #bdbdbd; stroke-width: 1.4; }
.tab { width: 245px; height: 38px; margin: 0 0 -1px 14px; background: #141414; border: 1px solid #b6b6b6; border-bottom: 0; border-radius: 5px 5px 0 0; display: flex; align-items: center; padding: 0 8px 0 6px; }
.favicon { width: 21px; height: 20px; }
.tab-title { margin-left: 4px; font-size: 14.700px; color: #f0f0f0; white-space: nowrap; }
.tab-close { width: 13px; height: 14px; margin-left: auto; margin-right: 1px; fill: none; stroke: #e0e0e0; stroke-width: 1.3; }
.tab-new { width: 16px; height: 16px; margin: 0 0 11px 13px; fill: none; stroke: #c8c8c8; stroke-width: 1.2; }
.win-controls { margin-left: auto; display: flex; gap: 30px; padding: 0 13px 9px 0; }
.wc { width: 20px; height: 20px; fill: none; stroke: #cfcfcf; stroke-width: 1.3; }

.addressbar { height: 52px; flex: none; display: flex; align-items: center; padding: 0 12.500px 0 19px; }
.nav { width: 12px; height: 20px; fill: none; stroke: #cdcdcd; stroke-width: 1.4; margin-right: 28px; }
.nav.dim { stroke: #4c4c4c; margin-right: 26px; }
.nav.reload { width: 20px; height: 20px; }
.ab-dots { width: 2px; height: 12px; margin: 0 0 0 -19px; background: #3d3d3d; }
.lock { width: 14px; height: 18px; margin-left: 27px; }
.lock-body { fill: #d6d6d6; }
.lock-arc { fill: none; stroke: #d6d6d6; stroke-width: 1.6; }
.url { margin-left: 25px; font-size: 16.080px; color: #a8a8a8; white-space: nowrap; }
.url b { font-weight: 400; color: #f2f2f2; }
.ab-tools { margin-left: auto; display: flex; align-items: center; gap: 12.400px; }
.ab-i { width: 20px; height: 20px; fill: none; stroke: #bcbcbc; stroke-width: 1.2; }
.ab-i.i3 { margin-left: 9px; }
.ab-sep { width: 1px; height: 14px; background: #3a3a3a; }

.bookmarks { height: 40px; flex: none; display: flex; align-items: center; padding: 0 0 8px 17px; gap: 17.300px; font-size: 14.800px; color: #c4c4c4; white-space: nowrap; }
.bm { display: flex; align-items: center; gap: 12px; }
.bm.tight { gap: 6px; }
.bm.tight + .bm.tight { margin-left: -3px; }
.bm.ugg { gap: 9px; margin-left: 2px; }
.folder { width: 16px; height: 16px; fill: none; stroke: #c6c6c6; stroke-width: 1.1; }
.bm-fav { width: 20px; height: 20px; }
.bm-fav.thin { width: 14px; }
.bm-more { width: 14px; height: 14px; margin-left: auto; margin-right: 27px; fill: none; stroke: #b5b5b5; stroke-width: 1.1; }

/* SAP window */
.app { position: relative; flex: 1; min-height: 0; display: flex; flex-direction: column; background: #44637f; }
.titlebar { height: 38px; flex: none; background: #2c4f6f; display: flex; align-items: center; position: relative; padding: 0 13px 0 21px; }
.menubar { display: flex; gap: 17px; font-size: 17px; color: #dfe5ea; white-space: nowrap; }
.menubar .on { color: #fff; font-weight: 500; }
.drop-tab { position: absolute; left: 897px; top: 0; width: 57px; height: 17px; background: #6f7f8e; clip-path: polygon(0 0, 100% 0, 88% 100%, 10% 100%); display: flex; justify-content: center; }
.drop-tab svg { width: 14px; height: 8px; margin-top: 3px; fill: none; stroke: #d8dde2; stroke-width: 2; }
.app-title { position: absolute; left: 934px; top: 7px; font-size: 17.400px; font-weight: 500; color: #f2f4f6; text-decoration: underline; text-underline-offset: 3px; white-space: nowrap; }
.app-controls { margin-left: auto; display: flex; gap: 10px; }
.app-controls svg { width: 16px; height: 16px; fill: none; stroke: #e3e8ec; stroke-width: 1.3; }
.app-controls .bar { stroke-width: 2.5; }

.toolbar { height: 59px; flex: none; display: flex; align-items: flex-start; gap: 11.350px; padding: 21px 0 0 15px; background: #44637f; }
.ti { width: 25px; height: 25px; fill: none; stroke: #6b8499; stroke-width: 1.3; }
.ti.on { stroke: #e8edf1; }
.fat { stroke-width: 2.2; }
.thin-w { stroke-width: 1.6; }
.ti.sep { margin-left: 10.500px; }
.ti.sep-l { margin-left: 12.500px; }

.desktop { flex: 1; min-height: 0; position: relative; overflow: hidden; background: linear-gradient(180deg, #2f536b 0%, #43667f 40%, #5a7a99 100%); border-top: 2px solid #a3b1bd; border-left: 1px solid #90a1b0; border-right: 2px solid #dde3e8; display: flex; flex-direction: column; }
.desk-shade { position: absolute; inset: 0; background: rgba(60, 90, 135, .18); clip-path: polygon(1722px 0, 100% 0, 100% 100%, 1522px 100%); }
.desk-top { position: relative; display: flex; align-items: center; height: 100px; padding: 0 42px 0 50px; }
.hamburger { display: flex; flex-direction: column; gap: 5px; width: 24px; }
.hamburger span { display: block; height: 2.500px; background: #fff; }
.desk-i { width: 24px; height: 24px; fill: none; stroke: #eef2f5; stroke-width: 1.7; }
.desk-i.bag { margin-left: auto; }
.desk-i.find { margin-left: 52px; }
.welcome { position: relative; margin-top: 159px; font-family: "Liberation Sans", Arial, sans-serif; font-size: 22.400px; color: #e9edf1; -webkit-text-stroke: .25px #e9edf1; }
.welcome p { height: 62.700px; line-height: 62.700px; white-space: nowrap; }
.w1 { margin-left: 980px; }
.w2 { margin-left: 980px; }
.w3 { margin-left: 768px; }
.w4 { margin-left: 849px; }
.w5 { margin-left: 701px; display: flex; align-items: center; gap: 16px; }
.plus { width: 24px; height: 24px; fill: none; stroke: #2aa3e2; stroke-width: 2; }
.scrollbar { position: absolute; right: 5px; top: 113px; bottom: 2px; width: 10px; border-radius: 5px; background: #a5acb5; }

.status { height: 51px; flex: none; background: #fff; position: relative; display: flex; border-left: 1px solid #d0d5da; padding: 8px 0 0 5px; border-bottom: 1px solid #8c8c8c; }
.fields { display: grid; grid-template-columns: 873px 108px 365px 367px; grid-template-rows: 16px 16px; row-gap: 6px; column-gap: 0; }
.field { background: #e6eef6; border: 1px solid #c7cdd3; border-bottom-width: 2px; border-radius: 2px; }
.end-f { margin-left: 7px; }
.stamp { font-size: 11px; line-height: 16px; text-align: center; color: #222; font-weight: 500; padding-right: 5px; }
.sap-logo { margin-left: 27px; display: flex; align-items: center; gap: 3px; height: 30px; margin-top: 2px; font-family: "Liberation Sans", Arial, sans-serif; }
.sap-word { font-size: 26px; line-height: 26px; font-weight: 700; color: #a8a8a8; letter-spacing: -1px; }
.sap-sub { display: flex; flex-direction: column; line-height: 1; }
.sap-sub small { font-size: 11px; color: #b0b0b0; }
.sap-sub strong { font-size: 20px; line-height: 18px; font-weight: 700; color: #f0a830; }
.grip { position: absolute; right: 2px; bottom: 2px; width: 12px; height: 12px; fill: none; stroke: #888; stroke-width: 1; }

.tooltip { position: absolute; left: 1px; bottom: 0; width: 192px; height: 34px; border: 2px solid #b7b7b7; background: linear-gradient(180deg, #c9c9c9 0%, #ececec 55%, #fff 100%); display: flex; align-items: center; padding-left: 3px; font-size: 13.300px; color: #333; white-space: nowrap; }
.tt-icon { width: 24px; height: 28px; margin-right: 10px; }

/* menus */
.menu { position: absolute; background: #f0f2f7; border: 1px solid #b4bac1; box-shadow: 1px 1px 2px rgba(0,0,0,.25); padding-top: 2px; font-size: 17.100px; color: #3d3d3d; white-space: nowrap; }
.menu-1 { left: 378px; top: 42px; width: 250px; height: 381px; z-index: 1; background: linear-gradient(90deg, #fafbfd 32px, #f0f2f7 32px); padding-right: 10px; font-size: 16.700px; }
.menu-2 { left: 622px; top: 67px; width: 358px; height: 456px; z-index: 2; background: linear-gradient(90deg, #fafbfd 32px, #f0f2f7 32px); padding-right: 12px; }
.menu-3 { left: 974px; top: 467px; width: 588px; height: 331px; z-index: 3; background: linear-gradient(90deg, #fafbfd 32px, #f0f2f7 32px); }
.mi { position: relative; height: 25px; display: flex; align-items: center; }
.menu-1 .mi { padding-left: 51px; }
.menu-2 .mi { padding-left: 51px; }
.menu-3 .mi { padding-left: 50px; }
.menu .hl { background: #e6eef6; }
.mico { position: absolute; left: 5px; top: 2px; width: 21px; height: 22px; fill: none; stroke: #222; stroke-width: 1.2; }
.solid { fill: #1c1c1c; }
.grey { fill: #8b8b8b; stroke: none; }
.hole { fill: #f4f4f4; stroke: none; }
.thick { stroke-width: 1.7; }
.arrow { margin-left: auto; margin-top: -5px; width: 0; height: 0; border-left: 5px solid #1e1e1e; border-top: 4.500px solid transparent; border-bottom: 4.500px solid transparent; }
.arrow.faint { border-left-color: #fff; }
.mark { position: absolute; top: -1px; height: 27px; border: 2px solid #f00000; border-radius: 6px; }
.menu-1 .mark { left: 2px; width: 234px; }
.menu-2 .mark { left: 41px; width: 234px; }
.menu-3 .mark { left: 35px; width: 235px; }

/* taskbar */
.taskbar { height: 59px; flex: none; background: #1c1c1c; display: flex; align-items: center; position: relative; }
.tb-icons { margin-left: 547.200px; display: flex; }
.tb-item { position: relative; width: 55.200px; height: 59px; display: flex; align-items: center; justify-content: center; }
.tb-i { width: 30px; height: 30px; }
.tb-item.dot::after { content: ""; position: absolute; left: 50%; bottom: 4px; width: 7px; height: 5px; margin-left: -3.500px; border-radius: 2px; background: #8a8a8a; }
.tb-item.active::before { content: ""; position: absolute; left: 3px; right: 3px; top: 5px; bottom: 4px; border-radius: 5px; background: #262626; border-right: 2px solid #333; }
.tb-item.active .tb-i { position: relative; }
.tb-item.active::after { content: ""; position: absolute; left: 50%; bottom: 5px; width: 20px; height: 4px; margin-left: -10px; border-radius: 2px; background: #7bd6d8; }
.badge { position: absolute; left: 29px; top: 9px; width: 17px; height: 17px; border-radius: 50%; background: #d5134b; color: #fff; font-size: 11px; line-height: 17px; text-align: center; }
.cal { width: 28px; height: 30px; border: 2px solid #eee; border-top-width: 5px; border-radius: 3px; background: #111; color: #fff; font: 700 14px/22px "Liberation Sans", sans-serif; text-align: center; }
.notion { width: 26px; height: 28px; border: 2px solid #fff; border-radius: 4px; background: #111; color: #fff; font: 700 18px/24px "Liberation Serif", serif; text-align: center; }
.via { width: 30px; height: 30px; border-radius: 3px; background: #f2f2f2; color: #777; font: 700 16px/30px "Liberation Sans", sans-serif; display: flex; justify-content: center; }
.via i { color: #c8364a; }
.clock { position: absolute; right: 77px; top: 10px; font-size: 14.400px; line-height: 20px; color: #d8d8d8; text-align: right; }
.copilot { position: absolute; left: 1866px; top: 13px; width: 30px; height: 38px; }
.copilot svg { width: 30px; height: 38px; }
.copilot span { position: absolute; left: 6px; bottom: 0; width: 24px; height: 13px; background: #f2c200; color: #222; border-radius: 2px; font: 700 9px/13px "Liberation Mono", monospace; text-align: center; }
```
